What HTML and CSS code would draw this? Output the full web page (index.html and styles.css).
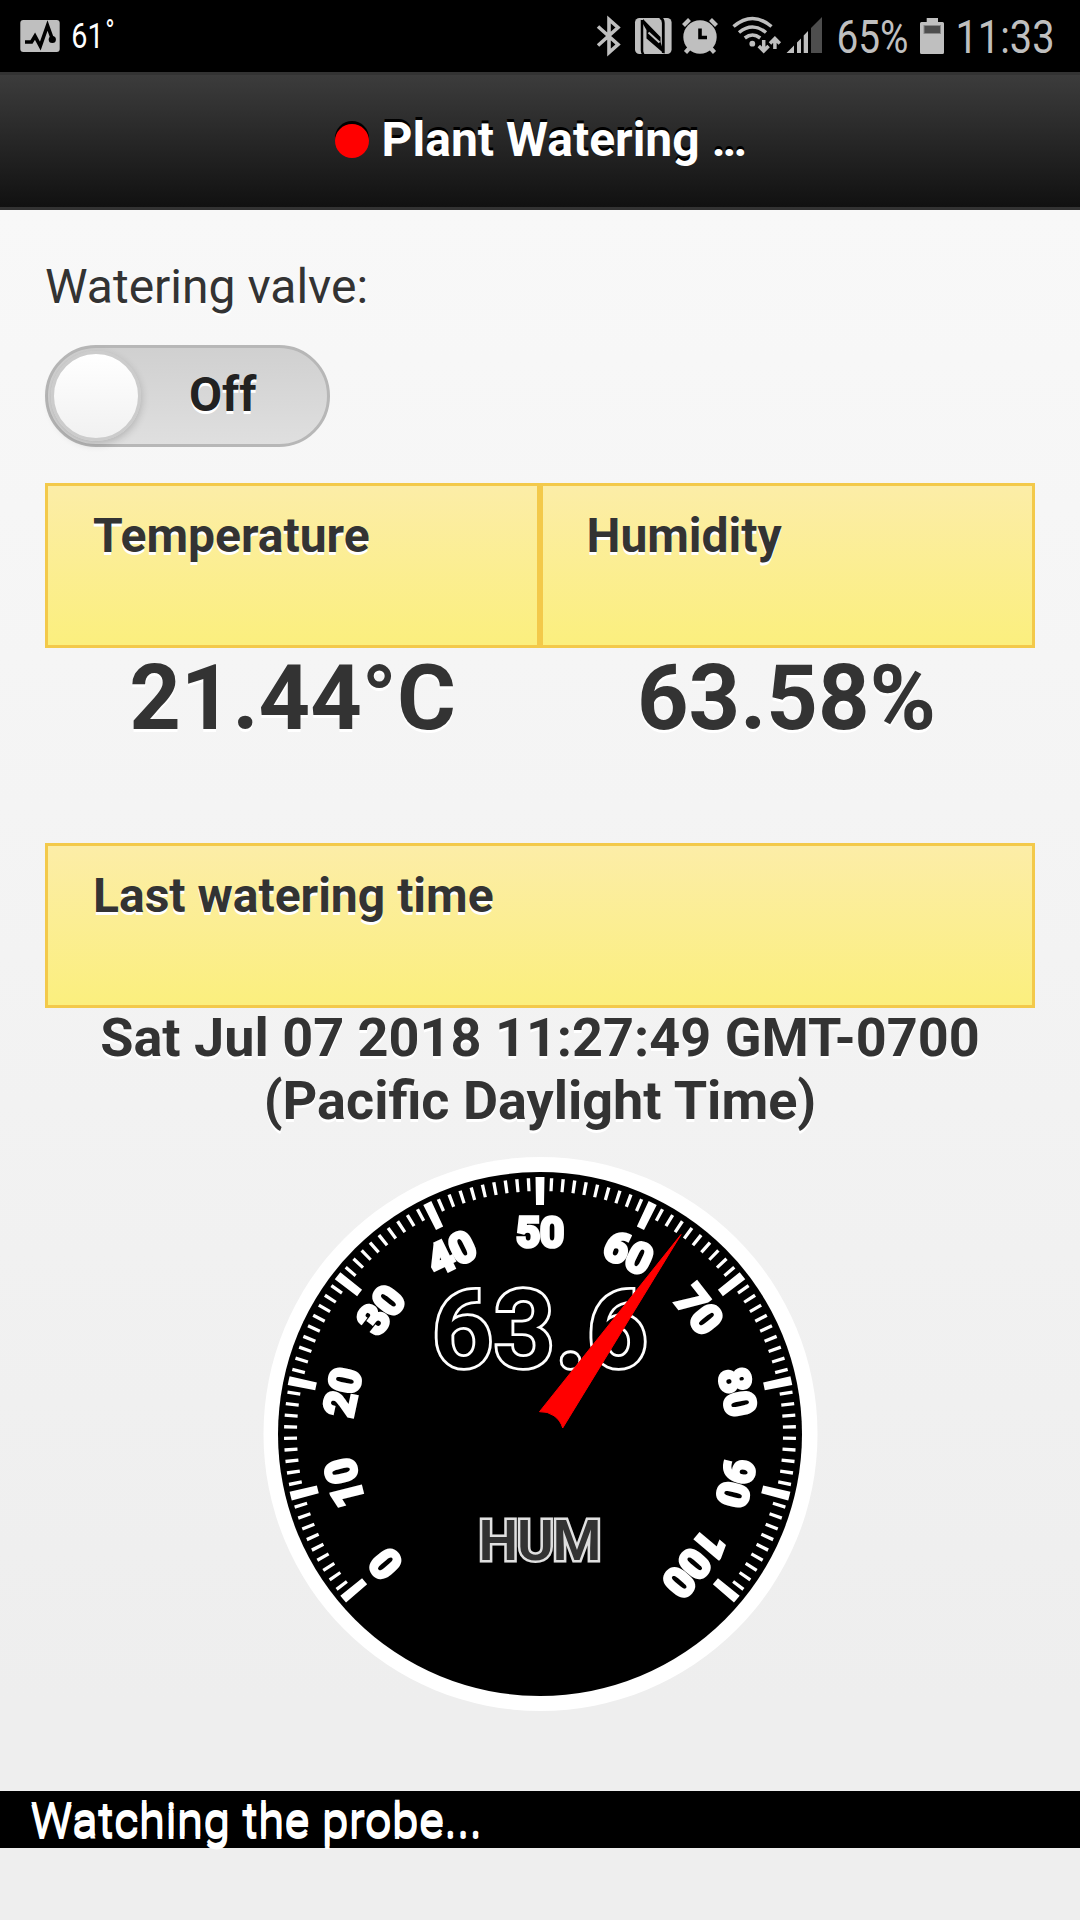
FILE: index.html
```html
<!DOCTYPE html>
<html lang="en">
<head>
<meta charset="utf-8">
<title>Plant Watering</title>
<link rel="stylesheet" href="styles.css">
</head>
<body>
<div class="statusbar">
  <svg class="status-left" width="130" height="72" viewBox="0 0 130 72">
    <rect x="20.3" y="20" width="39.4" height="32" rx="3" fill="#bfbfbf"/>
    <path d="M25 42H31.5L35 36.2 40.3 46L47.5 25.5 52 38" fill="none" stroke="#000" stroke-width="3.6"/>
    <circle cx="52.3" cy="39.5" r="3.6"/>
    <text class="status-temp" transform="translate(71.300 48.300) scale(.81 1)">61<tspan class="status-deg" dx="2" dy="-6">°</tspan></text>
  </svg>
  <svg class="status-right" width="500" height="72" viewBox="580 0 500 72">
    <g fill="none" stroke="#bfbfbf" stroke-width="3.6">
      <path d="M598 26.500L618 44.500 609 52.500V19.500L618 27.500 598 45.500"/>
    </g>
    <rect x="635" y="18" width="36.600" height="36" rx="4.500" fill="#bfbfbf"/>
    <path d="M643.600 54.500C641.500 53 642 51 642 49V20" fill="none" stroke="#000" stroke-width="2.500"/>
    <path d="M660 17.500C662.500 18.500 663.300 20 663.300 23V53" fill="none" stroke="#000" stroke-width="2.800"/>
    <path d="M643 19L660.500 37V42L664.500 54L646.500 38.500V30L643 24Z" fill="#000"/>
    <path d="M648.500 32.500L659.500 42.500" stroke="#bfbfbf" stroke-width="2"/>
    <circle cx="700" cy="37" r="16.700" fill="#bfbfbf"/>
    <g fill="none" stroke="#bfbfbf" stroke-width="4.200">
      <path d="M683.500 25.500L689.500 19.500M710.500 19.500L716.500 25.500M689.500 48L685.500 52.500M710.500 48L714.500 52.500"/>
    </g>
    <path d="M700 28.500V37.500H707" fill="none" stroke="#000" stroke-width="3.600"/>
    <g fill="none" stroke="#bfbfbf" stroke-width="3.500">
      <path d="M733.500 26.500Q752.500 10.500 771.500 26.500M739 32.500Q752.500 21.500 766 32.500M744.800 38Q752.500 32 760.200 38"/>
      <path d="M763.700 40V50M758.800 46L763.700 51L768.600 46M774.900 49V39M770 43.500L774.900 38.500L779.800 43.500"/>
    </g>
    <circle cx="752.300" cy="43.700" r="2.900" fill="#bfbfbf"/>
    <path d="M786.500 53L794 45.500V53ZM797 53V42.500L801 38.500V53ZM803.700 53V35.500L808 31V53Z" fill="#bfbfbf"/>
    <path d="M811 53V28L822 17V53Z" fill="#4d4d4d"/>
    <text class="status-text" x="836.500" y="53.200" textLength="72" lengthAdjust="spacingAndGlyphs">65%</text>
    <path d="M926.700 18H938V22H942.500Q944 22 944 23.500V52.500Q944 54 942.500 54H921.500Q920 54 920 52.500V23.500Q920 22 921.500 22H926.700Z" fill="#bfbfbf"/>
    <rect x="924" y="25.500" width="16.500" height="8" fill="#4d4d4d" stroke="#8a8a8a" stroke-width="1"/>
    <text class="status-text" x="955.500" y="53.200" textLength="99" lengthAdjust="spacingAndGlyphs">11:33</text>
  </svg>
</div>
<header class="header">
  <span class="led"></span>
  <h1 class="title">Plant Watering <span class="dots">...</span></h1>
</header>
<main class="content">
  <div class="label">Watering valve:</div>
  <div class="switch"><span class="knob"></span><span class="switch-text">Off</span></div>
  <div class="row">
    <section class="cell"><div class="bar">Temperature</div><div class="value">21.44°C</div></section>
    <section class="cell cell-right"><div class="bar">Humidity</div><div class="value">63.58%</div></section>
  </div>
  <section>
    <div class="bar">Last watering time</div>
    <div class="date">Sat Jul 07 2018 11:27:49 GMT-0700<br>(Pacific Daylight Time)</div>
  </section>
  <svg class="gauge" width="560" height="560" viewBox="0 0 560 560">
    <circle cx="280.500" cy="280" r="277" fill="#fff"/>
    <g class="soft">
      <circle cx="280" cy="280" r="262" fill="#000"/>
      <path class="ticks-minor" pathLength="260.76" d="M89.800 441.500A249.500 249.500 0 1 1 470.200 441.500"/>
      <path class="ticks-major" pathLength="262" d="M96.600 439.400A243 243 0 1 1 463.400 439.400"/>
      <g class="scale">
        <text x="280" y="93" transform="rotate(-130 280 280)">0</text>
        <text x="280" y="93" transform="rotate(-104 280 280)">10</text>
        <text x="280" y="93" transform="rotate(-78 280 280)">20</text>
        <text x="280" y="93" transform="rotate(-52 280 280)">30</text>
        <text x="280" y="93" transform="rotate(-26 280 280)">40</text>
        <text x="280" y="93">50</text>
        <text x="280" y="93" transform="rotate(26 280 280)">60</text>
        <text x="280" y="93" transform="rotate(52 280 280)">70</text>
        <text x="280" y="93" transform="rotate(78 280 280)">80</text>
        <text x="280" y="93" transform="rotate(104 280 280)">90</text>
        <text x="280" y="93" transform="rotate(130 280 280)">100</text>
      </g>
      <text class="reading" x="280" y="213" textLength="216">63.6</text>
      <text class="unit" x="280" y="406" textLength="123">HUM</text>
      <path d="M421 80.500L279.500 257.700A22.500 22.500 0 0 1 302.700 274Z" fill="#f00" stroke="#f00"/>
    </g>
  </svg>
</main>
<footer class="footer">Watching the probe...</footer>
</body>
</html>
```
FILE: styles.css
```css
* { box-sizing: border-box; }

body {
  margin: 0;
  width: 1080px;
  height: 1920px;
  display: flex;
  flex-direction: column;
  font: 48px/60px Roboto, "Liberation Sans", sans-serif;
  color: #333;
  text-shadow: 0 3px 0 #fff;
  background: linear-gradient(#f8f8f8 210px, #eee 1700px);
}

.statusbar {
  flex: none;
  height: 72px;
  display: flex;
  justify-content: space-between;
  background: #000;
  text-shadow: none;
}
.status-text { font-size: 45.5px; fill: #bfbfbf; }
.status-temp { font-size: 35.5px; fill: #fff; }
.status-deg { font-size: 31px; }

.header {
  flex: none;
  height: 138px;
  display: flex;
  align-items: center;
  justify-content: center;
  padding: 0 1px 1px 0;
  border-top: 3px solid #333;
  border-bottom: 3px solid #333;
  background: linear-gradient(#3c3c3c, #111);
  color: #fff;
  text-shadow: 0 -3px 0 #000;
}
.led {
  width: 34px;
  height: 34px;
  margin-right: 13px;
  border-radius: 50%;
  background: #f00;
  box-shadow: 0 -3px 0 #000;
}
.title { margin: 0; padding-bottom: 1px; font-size: 48px; font-weight: 700; }
.dots { letter-spacing: -3px; }

.content { flex: none; height: 1581px; padding: 47px 45px 0; }
.label { height: 60px; }

.switch {
  width: 285px;
  height: 102px;
  margin: 28px 0 36px;
  padding-left: 3px;
  display: flex;
  align-items: center;
  border: 3px solid #b7b7b7;
  border-radius: 51px;
  background: linear-gradient(#d0d0d0, #dfdfdf);
}
.knob {
  width: 90px;
  height: 90px;
  border: 3px solid #ccc;
  border-radius: 50%;
  background: linear-gradient(#fff, #f1f1f1);
  box-shadow: 0 3px 9px rgba(0, 0, 0, .2);
}
.switch-text {
  margin-left: 48px;
  padding-bottom: 2px;
  color: #222;
  font-weight: 700;
}

.row { display: flex; }
.cell { flex: 1; height: 360px; }
.bar {
  height: 165px;
  padding: 20px 45px;
  border: 3px solid #f3c94a;
  background: linear-gradient(#fceda7, #fbef7e);
  font-weight: 700;
}
.value {
  padding-top: 1px;
  font-size: 90px;
  line-height: 100px;
  font-weight: 700;
  text-align: center;
}
.cell-right .bar { padding-left: 43.500px; }
.cell-right .value { padding-right: 2px; }
.date {
  margin-top: -2px;
  font-size: 54px;
  line-height: 63px;
  font-weight: 700;
  text-align: center;
}

.gauge { display: block; margin: 22px auto 0; }
.soft { filter: blur(.7px); }
.gauge text { text-anchor: middle; font-weight: 700; text-shadow: none; }
.ticks-minor { fill: none; stroke: #fff; stroke-width: 13; stroke-dasharray: .76 1.84; }
.ticks-major { fill: none; stroke: #fff; stroke-width: 28; stroke-dasharray: 2 24; }
.scale text { font-size: 42px; fill: #fff; stroke: #fff; stroke-width: 3.6; }
.gauge .reading { font-size: 107px; font-weight: 650; fill: #000; stroke: #fff; stroke-width: 5.6; paint-order: stroke; }
.gauge .unit { font-size: 56px; font-weight: 600; fill: #333; stroke: #e0e0e0; stroke-width: 5; paint-order: stroke; }

.footer {
  flex: none;
  height: 57px;
  padding-left: 30px;
  line-height: 57px;
  background: #000;
  color: #fff;
}
```
